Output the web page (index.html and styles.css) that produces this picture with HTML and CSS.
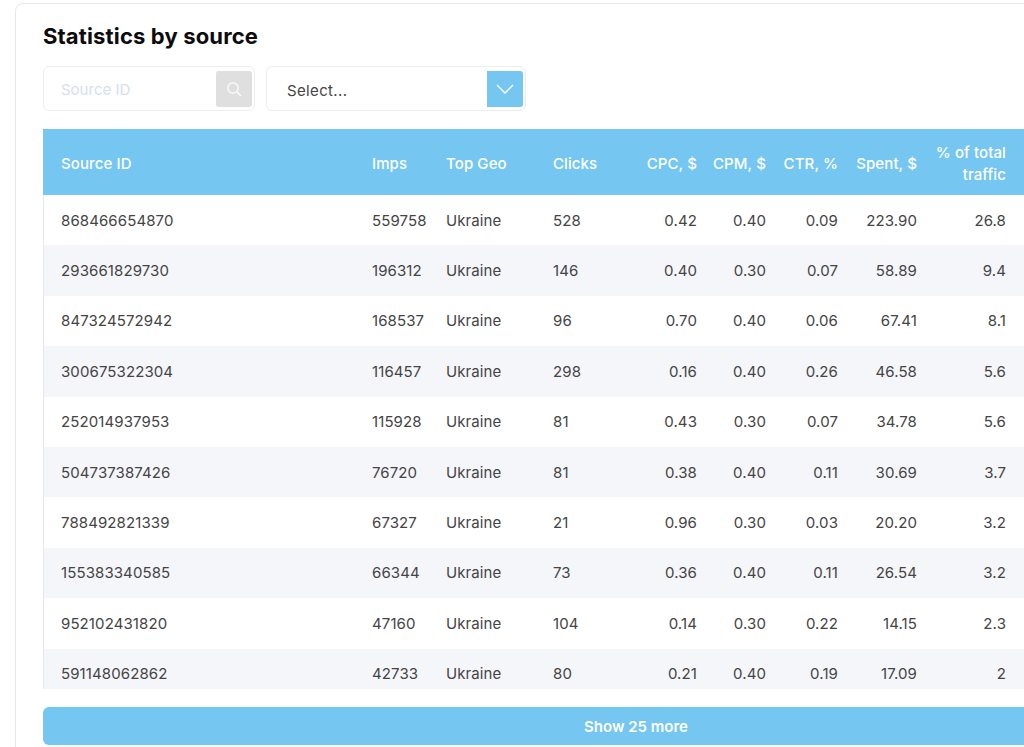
FILE: index.html
```html
<!DOCTYPE html>
<html lang="en">
<head>
<meta charset="utf-8">
<title>Statistics by source</title>
<link rel="stylesheet" href="styles.css">
</head>
<body>
<section class="card">
  <h2 class="title">Statistics by source</h2>
  <div class="filters">
    <div class="search">
      <span class="placeholder">Source ID</span>
      <span class="search-btn">
        <svg width="16" height="16" viewBox="0 0 16 16" fill="none" stroke="#fff" stroke-width="1.2"><circle cx="7" cy="7" r="5.2"/><path d="M11 11l4 4"/></svg>
      </span>
    </div>
    <div class="select">
      <span class="select-value">Select...</span>
      <span class="select-btn">
        <svg width="18" height="10" viewBox="0 0 18 10" fill="none" stroke="#fff" stroke-width="1.3"><path d="M1 1l8 8 8-8"/></svg>
      </span>
    </div>
  </div>
  <div class="table-wrap">
    <table class="stats">
      <colgroup>
        <col class="c-id"><col class="c-imps"><col class="c-geo"><col class="c-clicks"><col class="c-cpc"><col class="c-cpm"><col class="c-ctr"><col class="c-spent"><col class="c-pct"><col>
      </colgroup>
      <thead>
        <tr><th>Source ID</th><th>Imps</th><th>Top Geo</th><th>Clicks</th><th class="num">CPC, $</th><th class="num">CPM, $</th><th class="num">CTR, %</th><th class="num">Spent, $</th><th class="num wrap">% of total traffic</th><th></th></tr>
      </thead>
      <tbody>
        <tr><td>868466654870</td><td>559758</td><td>Ukraine</td><td>528</td><td class="num">0.42</td><td class="num">0.40</td><td class="num">0.09</td><td class="num">223.90</td><td class="num">26.8</td><td></td></tr>
        <tr><td>293661829730</td><td>196312</td><td>Ukraine</td><td>146</td><td class="num">0.40</td><td class="num">0.30</td><td class="num">0.07</td><td class="num">58.89</td><td class="num">9.4</td><td></td></tr>
        <tr><td>847324572942</td><td>168537</td><td>Ukraine</td><td>96</td><td class="num">0.70</td><td class="num">0.40</td><td class="num">0.06</td><td class="num">67.41</td><td class="num">8.1</td><td></td></tr>
        <tr><td>300675322304</td><td>116457</td><td>Ukraine</td><td>298</td><td class="num">0.16</td><td class="num">0.40</td><td class="num">0.26</td><td class="num">46.58</td><td class="num">5.6</td><td></td></tr>
        <tr><td>252014937953</td><td>115928</td><td>Ukraine</td><td>81</td><td class="num">0.43</td><td class="num">0.30</td><td class="num">0.07</td><td class="num">34.78</td><td class="num">5.6</td><td></td></tr>
        <tr><td>504737387426</td><td>76720</td><td>Ukraine</td><td>81</td><td class="num">0.38</td><td class="num">0.40</td><td class="num">0.11</td><td class="num">30.69</td><td class="num">3.7</td><td></td></tr>
        <tr><td>788492821339</td><td>67327</td><td>Ukraine</td><td>21</td><td class="num">0.96</td><td class="num">0.30</td><td class="num">0.03</td><td class="num">20.20</td><td class="num">3.2</td><td></td></tr>
        <tr><td>155383340585</td><td>66344</td><td>Ukraine</td><td>73</td><td class="num">0.36</td><td class="num">0.40</td><td class="num">0.11</td><td class="num">26.54</td><td class="num">3.2</td><td></td></tr>
        <tr><td>952102431820</td><td>47160</td><td>Ukraine</td><td>104</td><td class="num">0.14</td><td class="num">0.30</td><td class="num">0.22</td><td class="num">14.15</td><td class="num">2.3</td><td></td></tr>
        <tr><td>591148062862</td><td>42733</td><td>Ukraine</td><td>80</td><td class="num">0.21</td><td class="num">0.40</td><td class="num">0.19</td><td class="num">17.09</td><td class="num">2</td><td></td></tr>
      </tbody>
    </table>
  </div>
  <button class="more" type="button">Show 25 more</button>
</section>
</body>
</html>
```
FILE: styles.css
```css
html, body {
  margin: 0;
  padding: 0;
  height: 747px;
  overflow: hidden;
  background: #fff;
}
body {
  font-family: Inter, "Noto Sans", sans-serif;
  color: #444;
  padding: 3px 0 0 15px;
  box-sizing: border-box;
}
.card {
  width: 1242px;
  box-sizing: border-box;
  border: 1px solid #e3e7f2;
  border-radius: 8px;
  padding: 17px 27px 20px;
}
.title {
  margin: 0 0 15px;
  font-size: 22px;
  line-height: 30px;
  font-weight: 700;
  letter-spacing: 0.15px;
  color: #0c0c0c;
}
.filters {
  display: flex;
  gap: 11px;
  margin-bottom: 18px;
}
.search, .select {
  box-sizing: border-box;
  height: 45px;
  border: 1px solid #ebedf3;
  border-radius: 6px;
  display: flex;
  align-items: center;
  justify-content: space-between;
  padding-right: 2px;
}
.search { width: 212px; }
.select { width: 260px; }
.placeholder {
  margin-left: 17px;
  padding-top: 1px;
  font-size: 15px;
  color: #d6def3;
}
.select-value {
  margin-left: 20px;
  padding-top: 4px;
  font-size: 15px;
  letter-spacing: 0.35px;
  color: #444;
}
.search-btn, .select-btn {
  width: 36px;
  height: 36px;
  display: flex;
  align-items: center;
  justify-content: center;
}
.search-btn {
  background: #dfdfdf;
  border-radius: 3px;
}
.select-btn {
  background: #75c6f0;
  border-radius: 0 3px 3px 0;
}
.table-wrap {
  height: 560px;
  overflow: hidden;
}
.stats {
  width: 1186px;
  table-layout: fixed;
  border-collapse: collapse;
  font-size: 15px;
}
.c-id { width: 311px; }
.c-imps { width: 74px; }
.c-geo { width: 107px; }
.c-clicks { width: 86px; }
.c-cpc { width: 86px; }
.c-cpm { width: 69px; }
.c-ctr { width: 72px; }
.c-spent { width: 79px; }
.c-pct { width: 89px; }
.stats th, .stats td {
  padding: 0 18px;
  text-align: left;
  white-space: nowrap;
  letter-spacing: 0.1px;
}
.stats th {
  box-sizing: border-box;
  height: 66px;
  padding-top: 4px;
  background: #75c6f0;
  color: #fff;
  font-weight: 500;
  line-height: 22px;
}
.stats th.wrap { white-space: normal; }
.stats td {
  height: 50.4px;
  box-sizing: border-box;
}
.stats td:first-child { box-shadow: inset 1px 0 #e3e7f2; }
.stats .num { text-align: right; padding-left: 0; padding-right: 10px; }
.stats tbody tr:nth-child(even) td { background: #f5f6fa; }
.more {
  display: block;
  box-sizing: border-box;
  width: 1186px;
  height: 38px;
  margin: 18px 0 0 0;
  border: 0;
  border-radius: 6px;
  background: #75c6f0;
  color: #fff;
  font-family: inherit;
  font-size: 15px;
  font-weight: 600;
}
```
